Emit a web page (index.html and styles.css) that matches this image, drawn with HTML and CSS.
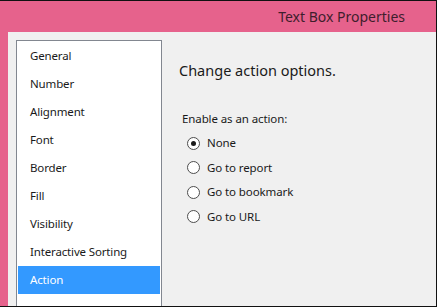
FILE: index.html
```html
<!DOCTYPE html>
<html lang="en">
<head>
    <meta charset="utf-8" />
    <title>Text Box Properties</title>
    <link rel="stylesheet" href="styles.css">
</head>
<body>
    <div class="dialog">
        <div class="title-bar">Text Box Properties</div>
        <div class="dialog-body">
            <ul class="page-list">
                <li>General</li>
                <li>Number</li>
                <li>Alignment</li>
                <li>Font</li>
                <li>Border</li>
                <li>Fill</li>
                <li>Visibility</li>
                <li>Interactive Sorting</li>
                <li class="selected">Action</li>
            </ul>
            <div class="page">
                <div class="page-heading">Change action options.</div>
                <div class="group-label">Enable as an action:</div>
                <div class="radio-list">
                    <label class="radio checked"><span class="radio-dot"></span>None</label>
                    <label class="radio"><span class="radio-dot"></span>Go to report</label>
                    <label class="radio"><span class="radio-dot"></span>Go to bookmark</label>
                    <label class="radio"><span class="radio-dot"></span>Go to URL</label>
                </div>
            </div>
        </div>
    </div>
</body>
</html>
```

FILE: styles.css
```css
:root {
    --title-pink: #e6628c;
    --title-text: #3e1e2c;
    --panel: #f0f0f0;
    --list-border: #828790;
    --select-blue: #3399ff;
    --text: #1a1a1a;
    --font-family: 'Noto Sans', 'Open Sans', sans-serif;
}

html, body {
    margin: 0;
    height: 100%;
}

body {
    font-family: var(--font-family);
    color: var(--text);
    overflow: hidden;
}

.dialog {
    box-sizing: border-box;
    height: 307px;
    display: flex;
    flex-direction: column;
    background-color: var(--title-pink);
    border-top: 1px solid #111;
    border-right: 1px solid #111;
    border-bottom: 1px solid #111;
}

.title-bar {
    height: 31px;
    flex: none;
    display: flex;
    align-items: center;
    justify-content: flex-end;
    padding-right: 31px;
    font-size: 14px;
    color: var(--title-text);
}

.dialog-body {
    flex: 1;
    display: flex;
    margin-left: 8px;
    padding: 8px 0 0 8px;
    background-color: var(--panel);
    overflow: hidden;
}

.page-list {
    list-style: none;
    margin: 0;
    padding: 1px 1px 0;
    width: 142px;
    flex: none;
    background-color: #fff;
    border: 1px solid var(--list-border);
    border-bottom: none;
}

.page-list li {
    height: 28px;
    line-height: 28px;
    padding-left: 12px;
    font-size: 11.5px;
    letter-spacing: -0.15px;
}

.page-list li.selected {
    background-color: var(--select-blue);
    color: #fff;
}

.page {
    padding: 19px 0 0 17px;
}

.page-heading {
    font-size: 14.5px;
    line-height: 22px;
    margin-bottom: 30px;
}

.group-label {
    font-size: 11.5px;
    letter-spacing: -0.1px;
    line-height: 16px;
    padding-left: 3px;
    margin-bottom: 8px;
}

.radio-list {
    display: flex;
    flex-direction: column;
    gap: 8.5px;
    padding-left: 8px;
}

.radio {
    display: flex;
    align-items: center;
    gap: 7px;
    font-size: 11.5px;
    letter-spacing: -0.1px;
    line-height: 16px;
}

.radio-dot {
    box-sizing: border-box;
    width: 13px;
    height: 13px;
    border: 1px solid #4d4d4d;
    border-radius: 50%;
    background-color: #fff;
    display: flex;
    align-items: center;
    justify-content: center;
}

.radio.checked .radio-dot::after {
    content: "";
    width: 5px;
    height: 5px;
    border-radius: 50%;
    background-color: #1a1a1a;
}
```
